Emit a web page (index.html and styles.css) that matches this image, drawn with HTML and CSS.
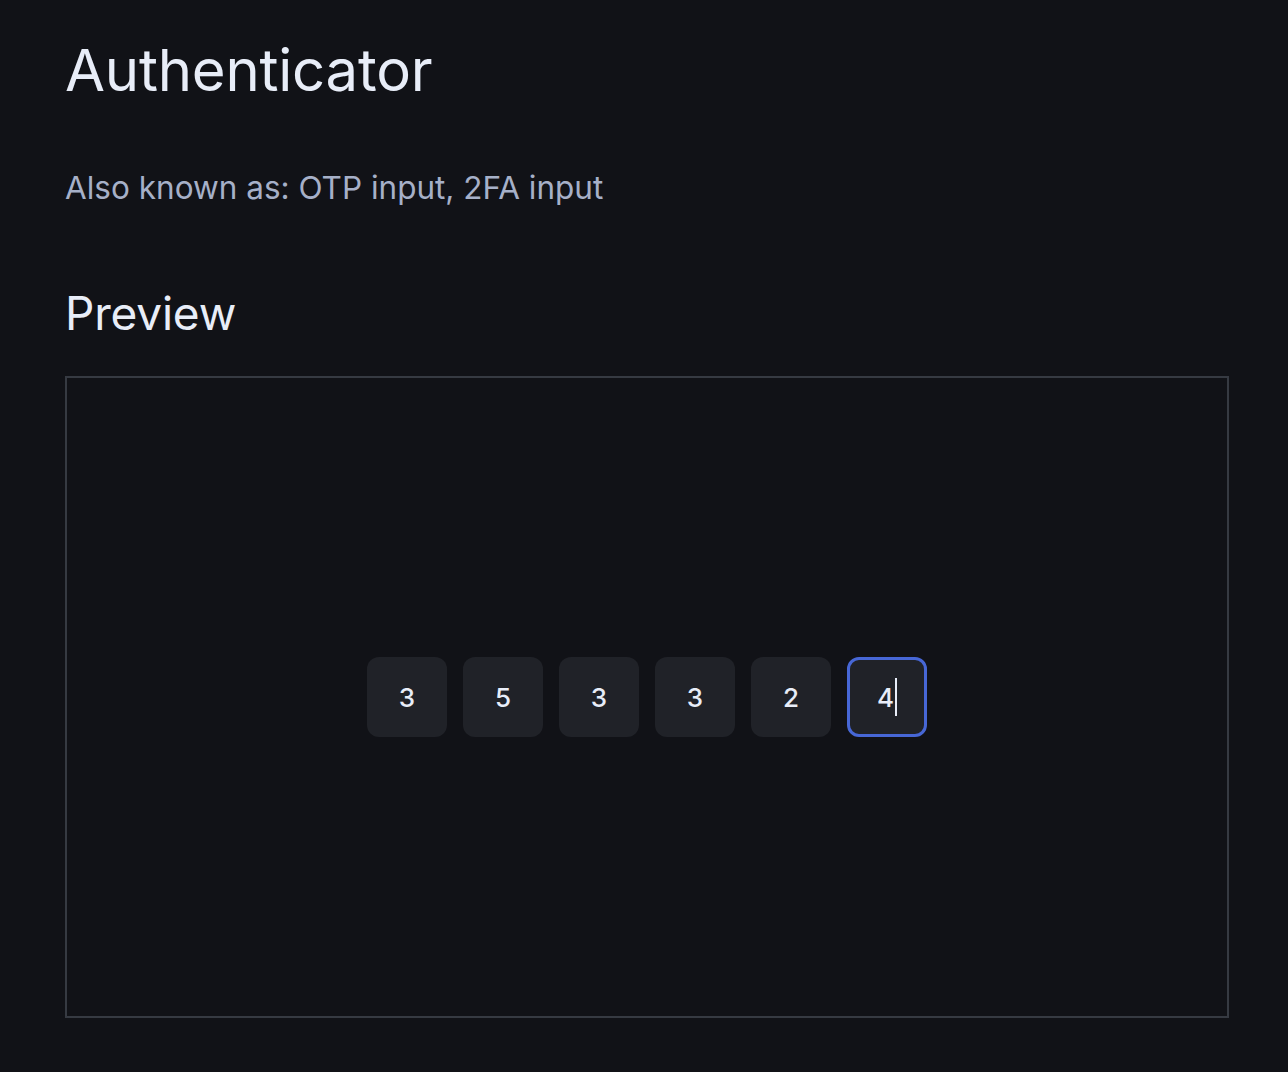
FILE: index.html
```html
<!DOCTYPE html>
<html>
<head>
<meta charset="utf-8">
<link rel="stylesheet" href="styles.css">
</head>
<body>
<main class="page">
  <h1 class="title">Authenticator</h1>
  <p class="aka">Also known as: OTP input, 2FA input</p>
  <h2 class="section">Preview</h2>
  <div class="preview">
    <div class="otp">
      <div class="digit">3</div>
      <div class="digit">5</div>
      <div class="digit">3</div>
      <div class="digit">3</div>
      <div class="digit">2</div>
      <div class="digit focused">4<span class="caret"></span></div>
    </div>
  </div>
</main>
</body>
</html>
```

FILE: styles.css
```css
html, body {
  margin: 0;
  background: #111217;
}
body {
  font-family: Inter, "Noto Sans", sans-serif;
  color: #e8edf8;
}
.page {
  padding: 0 59px 0 65px;
}
.title {
  margin: 0;
  padding-top: 34px;
  font-size: 58px;
  line-height: 72px;
  font-weight: 400;
  letter-spacing: -0.2px;
  color: #e8edf8;
}
.aka {
  margin: 0;
  padding-top: 62px;
  font-size: 31.5px;
  line-height: 40px;
  color: #a6b0c8;
}
.section {
  margin: 0;
  padding-top: 77px;
  font-size: 46px;
  line-height: 56px;
  font-weight: 400;
  letter-spacing: -0.2px;
  color: #e8edf8;
}
.preview {
  margin-top: 35px;
  height: 638px;
  border: 2px solid #363a42;
  display: flex;
  align-items: center;
  justify-content: center;
}
.otp {
  display: flex;
  gap: 16px;
}
.digit {
  width: 80px;
  height: 80px;
  box-sizing: border-box;
  border-radius: 12px;
  background: #202228;
  display: flex;
  align-items: center;
  justify-content: center;
  font-size: 26px;
  font-weight: 500;
  color: #e8edf8;
}
.digit.focused {
  border: 3px solid #4767d6;
}
.caret {
  display: inline-block;
  width: 2px;
  height: 38px;
  margin-left: 1px;
  background: #e8edf8;
}
```
